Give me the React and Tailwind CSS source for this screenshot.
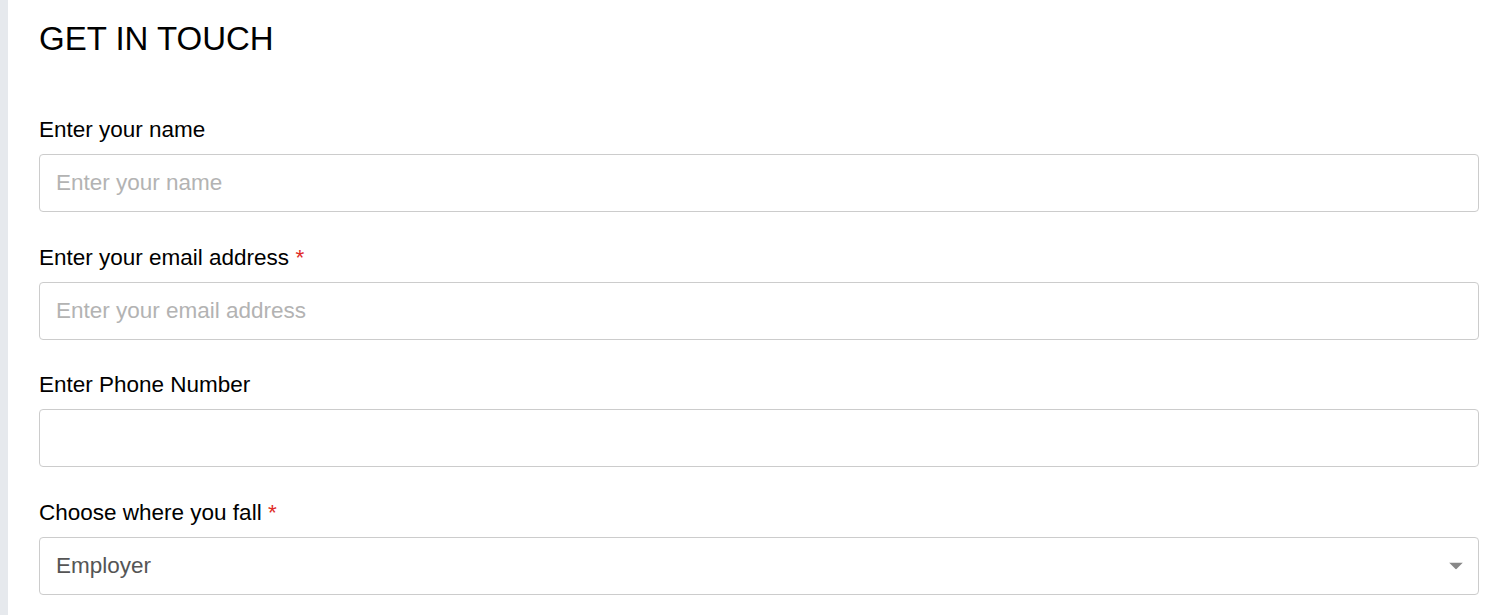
export default function App() {
  const font = { fontFamily: '"Liberation Sans", Arial, sans-serif' };
  const Label = ({ children, req }) => (
    <label className="block text-[22.5px] leading-[30px] text-black mb-[9px]">
      {children}
      {req && <span className="text-[#e02b27]"> *</span>}
    </label>
  );
  const inputCls =
    "block w-full h-[58px] border border-[#cccccc] rounded-[4px] px-[16px] text-[22.5px] text-[#555] placeholder:text-[#b3b3b3] bg-white outline-none";
  return (
    <div className="flex min-h-[615px] bg-white" style={font}>
      <div className="w-[8px] shrink-0 bg-[#e6e9ed]" />
      <div className="flex-1 pl-[31px] pr-[21px] pt-[19px]">
        <h1 className="text-[33px] leading-[40px] text-black font-normal mb-[56px]">GET IN TOUCH</h1>
        <div className="mb-[31px]">
          <Label>Enter your name</Label>
          <input className={inputCls} placeholder="Enter your name" />
        </div>
        <div className="mb-[30px]">
          <Label req>Enter your email address</Label>
          <input className={inputCls} placeholder="Enter your email address" />
        </div>
        <div className="mb-[31px]">
          <Label>Enter Phone Number</Label>
          <input className={inputCls} />
        </div>
        <div>
          <Label req>Choose where you fall</Label>
          <div className="relative h-[58px] border border-[#cccccc] rounded-[4px] bg-white flex items-center px-[16px] text-[22.5px] text-[#555]">
            <span>Employer</span>
            <svg className="absolute right-[15px] top-1/2 -translate-y-1/2" width="14" height="7" viewBox="0 0 14 7">
              <path d="M0 0 L14 0 L7 7 Z" fill="#888" />
            </svg>
          </div>
        </div>
      </div>
    </div>
  );
}
